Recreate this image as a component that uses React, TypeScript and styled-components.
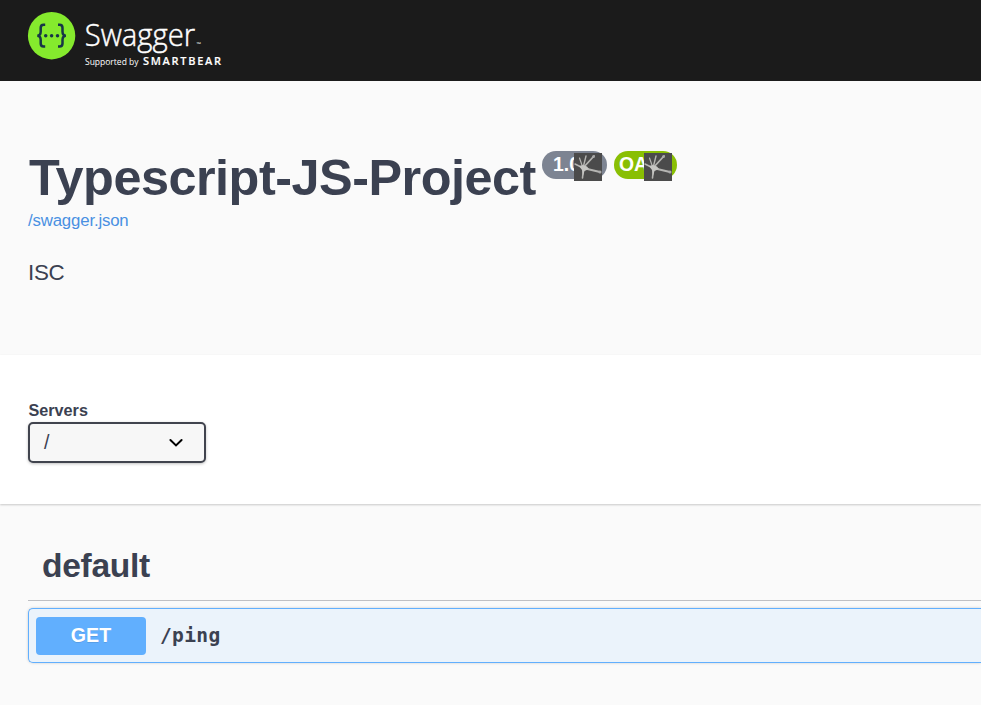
import React from 'react';
import styled, { createGlobalStyle } from 'styled-components';

const Global = createGlobalStyle`
  *, *::before, *::after { box-sizing: border-box; }
  html, body { margin: 0; height: 705px; overflow: hidden; background: #fafafa; }
  body { font-family: "Liberation Sans", Arial, sans-serif; color: #3b4151; }
`;

const Topbar = styled.header`
  height: 81px;
  background: #1b1b1b;
  padding: 8px 24px;
`;

const LogoSvg = styled.svg`
  display: block;
`;

const Info = styled.section`
  height: 274px;
  padding: 70px 28px 0;
`;

const TitleRow = styled.div`
  display: flex;
  align-items: flex-start;
  height: 60px;
`;

const Title = styled.h1`
  margin: -1px 0 0;
  padding-left: 1px;
  width: 514px;
  flex: none;
  font-size: 50.4px;
  letter-spacing: -0.49px;
  line-height: 55px;
  white-space: nowrap;
`;

const Badge = styled.span<{ $color: string; $width: number; $pad: number; $gap: number }>`
  flex: none;
  display: flex;
  width: ${p => p.$width}px;
  height: 28px;
  margin-right: ${p => p.$gap}px;
  padding-left: ${p => p.$pad}px;
  position: relative;
  border-radius: 14px;
  background: ${p => p.$color};
  color: #fff;
  font-size: 19.4px;
  font-weight: 700;
  line-height: 27px;
`;

const Patch = styled.svg<{ $right: number }>`
  position: absolute;
  right: ${p => p.$right}px;
  top: 2px;
`;

const SpecLink = styled.a`
  display: block;
  color: #4990e2;
  font-size: 16.8px;
  letter-spacing: -0.16px;
  line-height: 20px;
  text-decoration: none;
`;

const Description = styled.p`
  margin: 28px 0 0;
  font-size: 22.4px;
  letter-spacing: -0.3px;
  line-height: 28px;
`;

const Schemes = styled.section`
  position: relative;
  height: 149px;
  padding: 45px 28px 0;
  background: #fff;
  box-shadow: 0 1px 2px rgba(0, 0, 0, 0.2);
`;

const ServersLabel = styled.label`
  display: block;
  height: 22px;
  padding-left: 0.5px;
  font-size: 16.2px;
  font-weight: 700;
  line-height: 20px;
`;

const SelectBox = styled.div`
  display: flex;
  align-items: center;
  justify-content: space-between;
  width: 178px;
  height: 41px;
  padding: 0 20px 1px 14px;
  border: 2px solid #41444e;
  border-radius: 5px;
  background: #f7f7f7;
  box-shadow: 0 1px 3px rgba(0, 0, 0, 0.25);
  font-size: 19.6px;
  line-height: 22px;
`;

const Operations = styled.section`
  padding: 34px 0 0 28px;
`;

const TagHeading = styled.h2`
  margin: 0 0 7px;
  height: 63px;
  padding-left: 14px;
  border-bottom: 1px solid #bfc0c4;
  font-size: 33.6px;
  letter-spacing: -0.3px;
  line-height: 55px;
`;

const OpBlock = styled.div`
  display: flex;
  align-items: center;
  height: 55px;
  padding-left: 7px;
  border: 1px solid #61affe;
  border-right: 0;
  border-radius: 5px 0 0 5px;
  background: #ebf3fb;
  box-shadow: 0 0 3px rgba(0, 0, 0, 0.19);
`;

const Method = styled.span`
  width: 110px;
  height: 38px;
  margin-right: 14px;
  border-radius: 4px;
  background: #61affe;
  color: #fff;
  font-size: 19.6px;
  font-weight: 700;
  line-height: 37px;
  text-align: center;
  text-shadow: 0 1px 0 rgba(0, 0, 0, 0.1);
`;

const Path = styled.span`
  font-family: "DejaVu Sans Mono", monospace;
  font-size: 19.6px;
  font-weight: 700;
  letter-spacing: 0.3px;
`;

function Logo() {
  return (
    <LogoSvg width="204" height="64" viewBox="24 8 204 64">
      <circle cx="51.6" cy="35.7" r="23.7" fill="#85ea2d" />
      <g fill="none" stroke="#173647" strokeWidth="2.5">
        <path d="M45.2 24.8h-1.6q-2.9 0-2.9 3v3.7q0 4-3.4 4.2q3.4.2 3.4 4.2v3.7q0 3 2.9 3h1.6" />
        <path d="M58 24.8h1.6q2.9 0 2.9 3v3.7q0 4 3.4 4.2q-3.4.2-3.4 4.2v3.7q0 3-2.9 3H58" />
      </g>
      <g fill="#173647">
        <circle cx="45.7" cy="35.7" r="1.75" />
        <circle cx="51.6" cy="35.7" r="1.75" />
        <circle cx="57.5" cy="35.7" r="1.75" />
      </g>
      <g fill="#fff" fontFamily="'Open Sans', sans-serif">
        <text x="84.8" y="45.5" fontSize="31" fontWeight="300" stroke="#fff" strokeWidth="0.45" textLength="110.4" lengthAdjust="spacingAndGlyphs">Swagger</text>
        <text x="196.5" y="46" fontSize="5" textLength="4.5" lengthAdjust="spacingAndGlyphs">™</text>
        <text x="85" y="64.8" fontSize="8.6" textLength="53.5" lengthAdjust="spacingAndGlyphs">Supported by</text>
        <text x="143" y="64.6" fontSize="11" fontWeight="600" textLength="78" stroke="#fff" strokeWidth="0.15">SMARTBEAR</text>
      </g>
    </LogoSvg>
  );
}

function BurstPatch({ right }: { right: number }) {
  return (
    <Patch $right={right} width="28" height="28" viewBox="0 0 28 28">
      <rect width="28" height="28" fill="#4b4b4b" />
      <g stroke="#b5b5b2" strokeLinecap="round" fill="none">
        <path d="M9 15L20 3" strokeWidth="1.7" />
        <path d="M9 15L12 3" strokeWidth="1.4" />
        <path d="M9 15L5.5 5" strokeWidth="1.2" />
        <path d="M9 15L1 11" strokeWidth="1.4" />
        <path d="M9 15L26 19" strokeWidth="1.8" />
        <path d="M9.5 15L8.5 25" strokeWidth="1.6" />
      </g>
      <path d="M5 13L9 12l4 1.5 2 2.5-4.5 2-1.5 5L8 17z" fill="#c6c6c3" />
      <circle cx="19.5" cy="3.7" r="1.4" fill="#aaa" />
      <circle cx="26" cy="19" r="1.5" fill="#aaa" />
    </Patch>
  );
}

export default function App() {
  return (
    <>
      <Global />
      <Topbar><Logo /></Topbar>
      <Info>
        <TitleRow>
          <Title>Typescript-JS-Project</Title>
          <Badge $color="#7d8492" $width={65} $pad={11} $gap={7}>1.0<BurstPatch right={5} /></Badge>
          <Badge $color="#89bf04" $width={63} $pad={5} $gap={0}>OAS<BurstPatch right={5} /></Badge>
        </TitleRow>
        <SpecLink>/swagger.json</SpecLink>
        <Description>ISC</Description>
      </Info>
      <Schemes>
        <ServersLabel>Servers</ServersLabel>
        <SelectBox>
          <span>/</span>
          <svg width="16" height="12" viewBox="0 0 16 12">
            <path d="M2.4 4L8 9.4L13.6 4" fill="none" stroke="#000" strokeWidth="2" strokeLinecap="round" />
          </svg>
        </SelectBox>
      </Schemes>
      <Operations>
        <TagHeading>default</TagHeading>
        <OpBlock>
          <Method>GET</Method>
          <Path>/ping</Path>
        </OpBlock>
      </Operations>
    </>
  );
}
